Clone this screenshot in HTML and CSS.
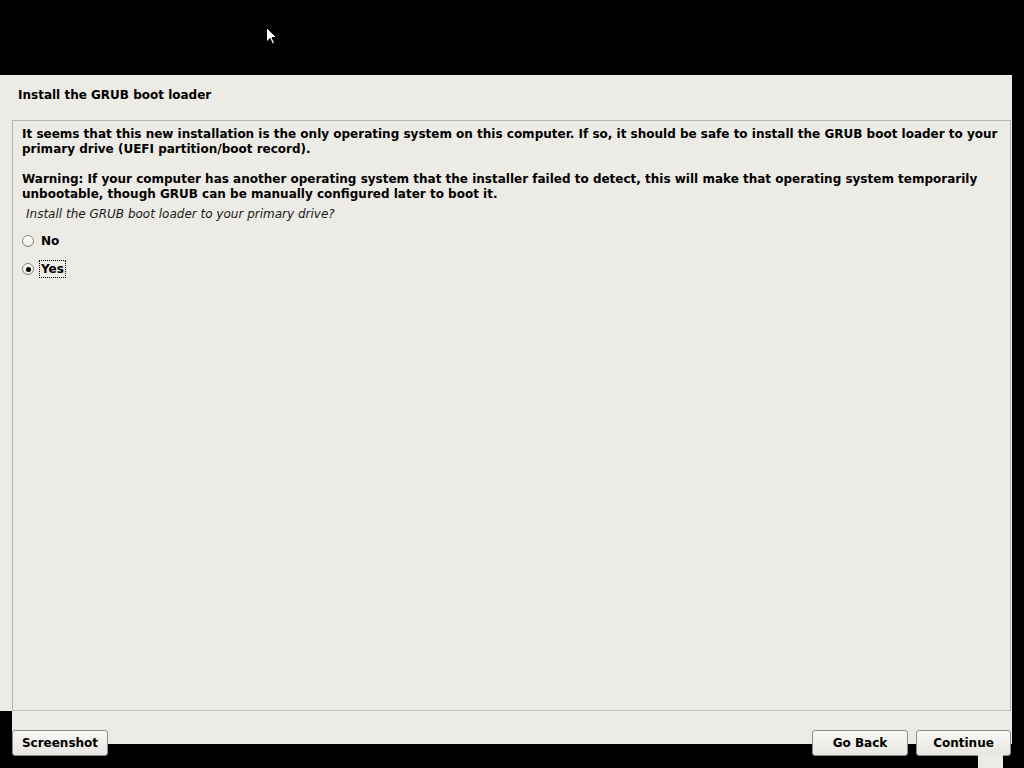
FILE: index.html
```html
<!DOCTYPE html>
<html>
<head>
<meta charset="utf-8">
<link rel="stylesheet" href="styles.css">
</head>
<body>
<div class="screen">
  <div class="window">
    <div class="title">Install the GRUB boot loader</div>
    <div class="frame">
      <p class="para">It seems that this new installation is the only operating system on this computer. If so, it should be safe to install the GRUB boot loader to your primary drive (UEFI partition/boot record).</p>
      <p class="para gap">Warning: If your computer has another operating system that the installer failed to detect, this will make that operating system temporarily unbootable, though GRUB can be manually configured later to boot it.</p>
      <p class="question">Install the GRUB boot loader to your primary drive?</p>
      <div class="options">
        <div class="option"><span class="radio"></span><span class="label">No</span></div>
        <div class="option"><span class="radio checked"></span><span class="label focus">Yes</span></div>
      </div>
    </div>
  </div>
  <div class="footer">
    <button class="btn">Screenshot</button>
    <div class="spacer"></div>
    <button class="btn">Go Back</button>
    <button class="btn">Continue</button>
  </div>
  <div class="stub"></div>
</div>
<svg class="cursor" width="12" height="19" viewBox="0 0 12 19"><path d="M0.5 0.5 L0.5 15 L4 11.5 L6.5 17 L8.5 16 L6 10.5 L10.5 10.5 Z" fill="#fff" stroke="#000" stroke-width="1"/></svg>
</body>
</html>
```
FILE: styles.css
```css
html, body {
  margin: 0;
  padding: 0;
  background: #000;
  width: 1024px;
  height: 768px;
  overflow: hidden;
}
body {
  font-family: "DejaVu Sans", sans-serif;
  font-size: 12px;
  color: #000;
  position: relative;
}
.screen {
  padding-top: 75px;
}
.window {
  width: 1012px;
  height: 636px;
  background: #edebe6;
  display: flex;
  flex-direction: column;
  box-sizing: border-box;
}
.title {
  font-weight: bold;
  line-height: 15px;
  padding: 13px 0 0 18px;
  height: 15px;
  margin-bottom: 17px;
}
.frame {
  flex: 1;
  margin-left: 12px;
  margin-right: 1px;
  border: 1px solid #b7b4ad;
  border-bottom-color: #c2bfb8;
  padding: 6px 10px 0 9px;
}
.para {
  margin: 0;
  font-weight: bold;
  line-height: 15px;
}
.para.gap {
  margin-top: 15px;
}
.question {
  margin: 5px 0 0 4px;
  font-style: italic;
  line-height: 15px;
  color: #1a1a1a;
}
.options {
  margin-top: 5px;
  display: flex;
  flex-direction: column;
}
.option {
  height: 28px;
  display: flex;
  align-items: center;
}
.radio {
  width: 10px;
  height: 10px;
  border: 1px solid #85837e;
  border-radius: 50%;
  background: linear-gradient(#ffffff, #eeece8);
  position: relative;
  margin-right: 7px;
}
.radio.checked::after {
  content: "";
  position: absolute;
  left: 2.5px;
  top: 2.5px;
  width: 5px;
  height: 5px;
  border-radius: 50%;
  background: #000;
}
.label {
  font-weight: bold;
  line-height: 16px;
  padding: 0 1px;
  border: 1px dotted transparent;
  margin-left: -2px;
}
.label.focus {
  border-color: #000;
}
.footer {
  margin-left: 12px;
  width: 1000px;
  height: 33px;
  background: #edebe6;
  display: flex;
  align-items: flex-start;
  padding-top: 19px;
  box-sizing: border-box;
  gap: 8px;
}
.spacer {
  flex: 1;
}
.btn {
  font-family: "DejaVu Sans", sans-serif;
  font-weight: bold;
  font-size: 12px;
  line-height: 14px;
  color: #000;
  height: 26px;
  width: 96px;
  border: 1px solid #8e8c87;
  border-radius: 3px;
  background: linear-gradient(#f9f8f6, #e7e5e0);
  padding: 0;
  flex-shrink: 0;
}
.btn:last-child {
  width: 95px;
  margin-right: 1px;
}
.stub {
  position: absolute;
  left: 978px;
  top: 755px;
  width: 25px;
  height: 13px;
  background: #edebe6;
}
.cursor {
  position: absolute;
  left: 266px;
  top: 27px;
}
```
